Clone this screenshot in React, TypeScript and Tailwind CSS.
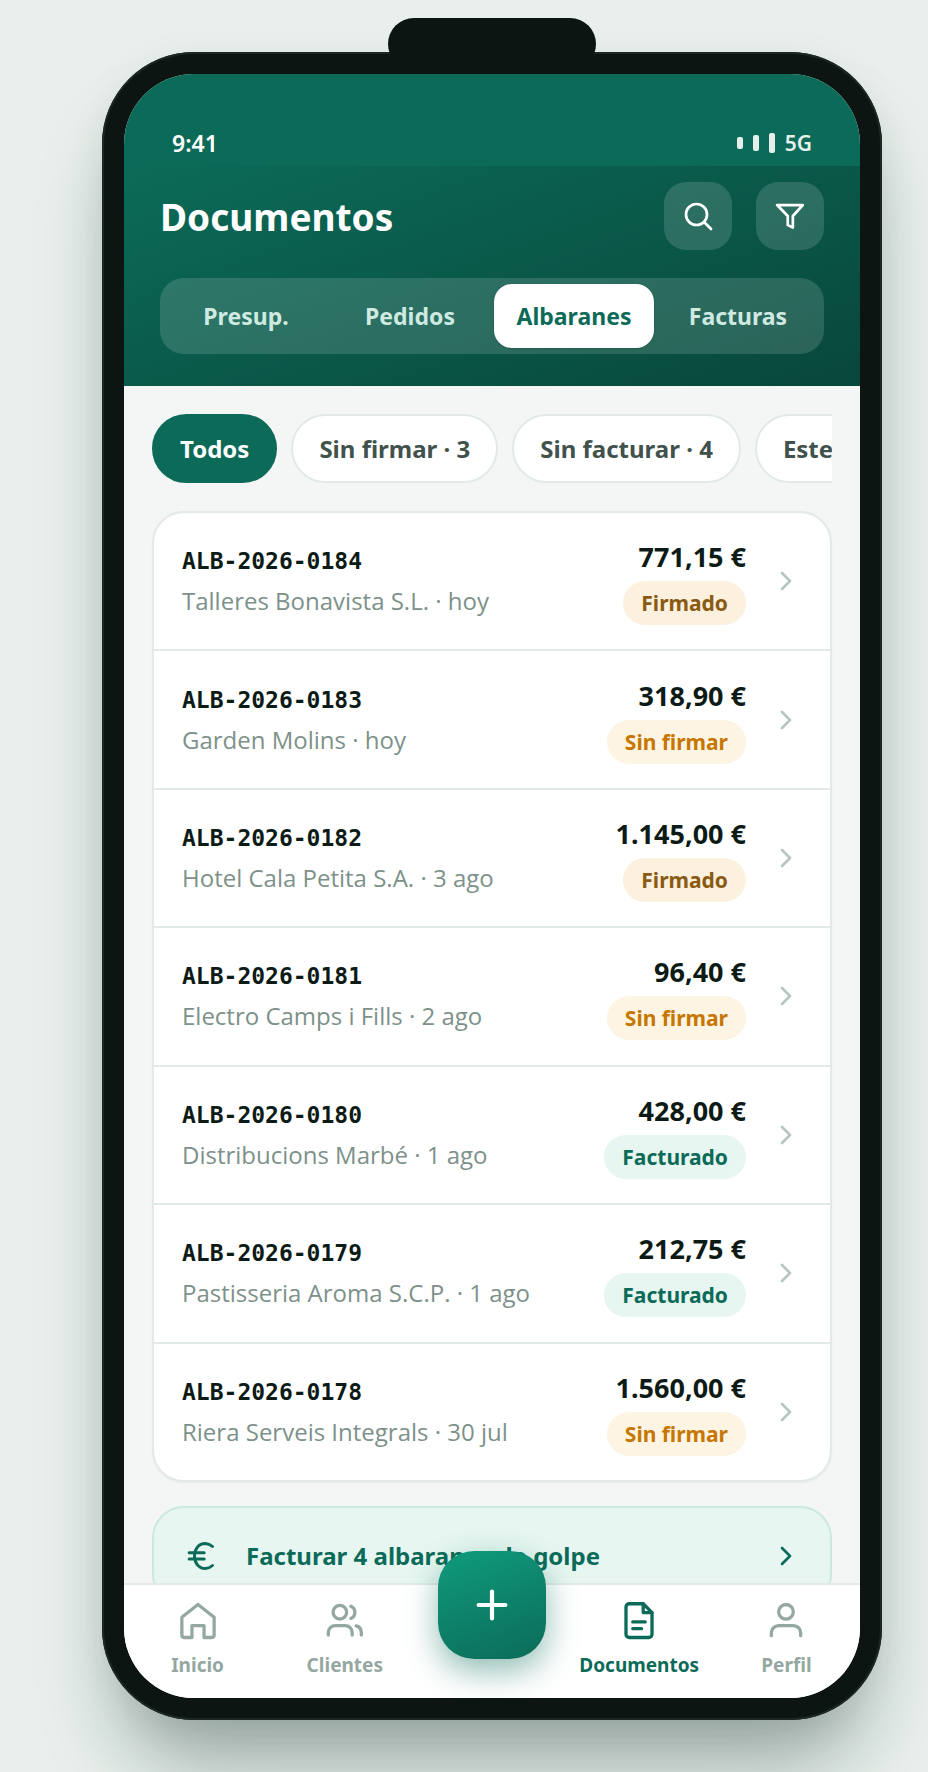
import { useState } from "react";
import type { ReactNode } from "react";
import clsx from "clsx";

type Status = "Firmado" | "Sin firmar" | "Facturado";

interface DeliveryNote {
  id: string;
  client: string;
  date: string;
  amount: string;
  status: Status;
}

const notes: DeliveryNote[] = [
  { id: "ALB-2026-0184", client: "Talleres Bonavista S.L.", date: "hoy", amount: "771,15 €", status: "Firmado" },
  { id: "ALB-2026-0183", client: "Garden Molins", date: "hoy", amount: "318,90 €", status: "Sin firmar" },
  { id: "ALB-2026-0182", client: "Hotel Cala Petita S.A.", date: "3 ago", amount: "1.145,00 €", status: "Firmado" },
  { id: "ALB-2026-0181", client: "Electro Camps i Fills", date: "2 ago", amount: "96,40 €", status: "Sin firmar" },
  { id: "ALB-2026-0180", client: "Distribucions Marbé", date: "1 ago", amount: "428,00 €", status: "Facturado" },
  { id: "ALB-2026-0179", client: "Pastisseria Aroma S.C.P.", date: "1 ago", amount: "212,75 €", status: "Facturado" },
  { id: "ALB-2026-0178", client: "Riera Serveis Integrals", date: "30 jul", amount: "1.560,00 €", status: "Sin firmar" },
];

const statusClasses: Record<Status, string> = {
  Firmado: "bg-[#fcf0df] text-[#8a5a12]",
  "Sin firmar": "bg-[#fef4e3] text-[#c77700]",
  Facturado: "bg-[#e7f6f1] text-[#0c6b58]",
};

const tabs = ["Presup.", "Pedidos", "Albaranes", "Facturas"];
const filters = ["Todos", "Sin firmar · 3", "Sin facturar · 4", "Este mes"];

interface IconProps {
  children: ReactNode;
  className: string;
  strokeWidth?: number;
}

function Icon({ children, className, strokeWidth = 1.8 }: IconProps) {
  return (
    <svg
      viewBox="0 0 24 24"
      fill="none"
      stroke="currentColor"
      strokeWidth={strokeWidth}
      strokeLinecap="round"
      strokeLinejoin="round"
      className={clsx("shrink-0", className)}
      aria-hidden="true"
    >
      {children}
    </svg>
  );
}

function Chevron({ className }: { className?: string }) {
  return (
    <Icon className={clsx("size-8", className)} strokeWidth={2}>
      <path d="m9 6 6 6-6 6" />
    </Icon>
  );
}

function StatusBar() {
  return (
    <div className="flex items-center justify-between bg-[#0c6b58] px-12 pt-[51px] pb-[5px] text-white">
      <span className="text-[23px] leading-9 font-semibold">9:41</span>
      <span className="flex items-center gap-2.5 text-[#e7efec]">
        <i className="h-3 w-1.5 rounded-xs bg-current" />
        <i className="h-4 w-1.5 rounded-xs bg-current" />
        <i className="h-5 w-1.5 rounded-xs bg-current" />
        <span className="text-[21px] leading-9 font-semibold">5G</span>
      </span>
    </div>
  );
}

interface HeaderProps {
  tab: string;
  onTabChange: (tab: string) => void;
}

function Header({ tab, onTabChange }: HeaderProps) {
  const buttonClass =
    "flex size-17 items-center justify-center rounded-[22px] bg-white/14 text-white";

  return (
    <header className="flex flex-col gap-7 bg-[linear-gradient(160deg,#0c6b58_0%,#08473b_100%)] px-9 pt-4 pb-8">
      <div className="flex items-center justify-between">
        <h1 className="text-[37px] leading-none font-bold text-white">Documentos</h1>
        <div className="flex gap-6">
          <button type="button" aria-label="Buscar" className={buttonClass}>
            <Icon className="size-9">
              <circle cx="11" cy="11" r="7" />
              <path d="m16.200 16.200 4.500 4.500" />
            </Icon>
          </button>
          <button type="button" aria-label="Filtrar" className={buttonClass}>
            <Icon className="size-9">
              <path d="M3.400 4.700h17.100L13.900 12v7.700l-3.400-1.600V12z" />
            </Icon>
          </button>
        </div>
      </div>
      <div className="flex gap-1 rounded-3xl bg-white/14 p-1.5">
        {tabs.map((label) => (
          <button
            key={label}
            type="button"
            aria-pressed={label === tab}
            onClick={() => onTabChange(label)}
            className={clsx(
              "h-16 flex-1 basis-0 rounded-[18px] text-[23px] font-bold",
              label === tab ? "bg-white text-[#0c6b58] shadow-sm" : "text-[#cfeae1]",
            )}
          >
            {label}
          </button>
        ))}
      </div>
    </header>
  );
}

function NoteRow({ note }: { note: DeliveryNote }) {
  return (
    <li className="flex flex-1 border-b-2 border-[#e2eae7] last:border-b-0">
      <a href={`#${note.id}`} className="flex flex-1 items-center gap-6 px-7">
        <span className="flex min-w-0 flex-1 flex-col gap-1">
          <span className="font-['DejaVu_Sans_Mono','Liberation_Mono',monospace] text-[23px] leading-9 font-bold text-[#0d1b17]">
            {note.id}
          </span>
          <span className="truncate font-['Open_Sans','Noto_Sans',sans-serif] text-[24px] leading-9 text-[#7d918a]">
            {note.client} · {note.date}
          </span>
        </span>
        <span className="flex flex-col items-end gap-1">
          <span className="text-[27px] leading-10 font-bold text-[#0d1b17]">{note.amount}</span>
          <span
            className={clsx(
              "rounded-full px-4.5 text-[21px] leading-11 font-bold",
              statusClasses[note.status],
            )}
          >
            {note.status}
          </span>
        </span>
        <Chevron className="text-[#b7c6c0]" />
      </a>
    </li>
  );
}

interface NavItemProps {
  label: string;
  active?: boolean;
  children: ReactNode;
}

function NavItem({ label, active = false, children }: NavItemProps) {
  return (
    <a
      href={`#${label.toLowerCase()}`}
      aria-current={active ? "page" : undefined}
      className={clsx(
        "flex flex-1 basis-0 flex-col items-center gap-2 text-[19px] leading-7 font-bold",
        active ? "text-[#0c6b58]" : "text-[#94a8a1]",
      )}
    >
      <Icon className="size-11">{children}</Icon>
      {label}
    </a>
  );
}

function BottomNav() {
  return (
    <nav className="relative flex border-t-2 border-[#e2eae7] bg-white pt-3.5 pb-[19px]">
      <NavItem label="Inicio">
        <path d="M3.200 10 12 3l8.800 7v9.700a1.300 1.300 0 0 1-1.300 1.300h-4.200v-6.500H8.700V21H4.500a1.300 1.300 0 0 1-1.300-1.300z" />
      </NavItem>
      <NavItem label="Clientes">
        <circle cx="9.200" cy="7.200" r="3.700" />
        <path d="M2.900 19.700v-1.500a3.700 3.700 0 0 1 3.700-3.700h5.600a3.700 3.700 0 0 1 3.700 3.700v1.500" />
        <path d="M15.200 4a3.600 3.600 0 0 1 0 6.600M18.100 14.700a3.700 3.700 0 0 1 2.800 3.600v1.400" />
      </NavItem>
      <div className="flex flex-1 basis-0 justify-center">
        <button
          type="button"
          aria-label="Nuevo documento"
          className="-mt-12 flex size-27 items-center justify-center rounded-[36px] bg-[linear-gradient(160deg,#0f9b7c,#0c6b58)] text-white shadow-[0_12px_32px_rgba(12,107,88,0.45)]"
        >
          <Icon className="size-11" strokeWidth={2.3}>
            <path d="M12 4.700v14.600M4.700 12h14.600" />
          </Icon>
        </button>
      </div>
      <NavItem label="Documentos" active>
        <path d="M14.300 2.600H6.700a1.800 1.800 0 0 0-1.800 1.800v14.800A1.800 1.800 0 0 0 6.700 21h10.600a1.800 1.800 0 0 0 1.800-1.800V7.400z" />
        <path d="M14.300 2.600v4.800h4.800M8.600 12.500h6.800M8.600 16.200h4.800" />
      </NavItem>
      <NavItem label="Perfil">
        <circle cx="12" cy="7" r="4" />
        <path d="M4 20v-1.500a4 4 0 0 1 4-4h8a4 4 0 0 1 4 4V20" />
      </NavItem>
    </nav>
  );
}

export default function App() {
  const [tab, setTab] = useState("Albaranes");
  const [filter, setFilter] = useState("Todos");

  return (
    <div className="h-screen overflow-hidden bg-[#e8efec] py-13 pr-[46px] pl-[102px] font-['Noto_Sans','Open_Sans',sans-serif]">
      <div className="relative h-full rounded-[92px] bg-[#0c1512] p-5.5 shadow-[0_60px_80px_-20px_rgba(12,40,32,0.37),0_8px_40px_rgba(12,40,32,0.06),inset_0_0_0_2px_#1c2622]">
        <div className="absolute -top-[34px] left-1/2 h-13 w-52 -translate-x-1/2 rounded-full bg-[#0c1512]" />
        <div className="flex h-full flex-col overflow-hidden rounded-[70px] bg-[#f4f6f5]">
          <StatusBar />
          <Header tab={tab} onTabChange={setTab} />

          <main className="flex min-h-0 flex-1 flex-col overflow-hidden px-7 pt-7">
            <div className="flex shrink-0 gap-3.5 overflow-x-auto [scrollbar-width:none]">
              {filters.map((label) => (
                <button
                  key={label}
                  type="button"
                  aria-pressed={label === filter}
                  onClick={() => setFilter(label)}
                  className={clsx(
                    "shrink-0 rounded-full border-2 px-6.5 py-4 text-[24px] leading-[33px] font-bold whitespace-nowrap",
                    label === filter
                      ? "border-[#0c6b58] bg-[#0c6b58] text-white"
                      : "border-[#e2eae7] bg-white text-[#41524c]",
                  )}
                >
                  {label}
                </button>
              ))}
            </div>

            <ul className="mt-7 flex min-h-[971px] shrink-0 flex-col overflow-hidden rounded-[32px] border-2 border-[#e2eae7] bg-white shadow-xs">
              {notes.map((note) => (
                <NoteRow key={note.id} note={note} />
              ))}
            </ul>

            <button
              type="button"
              className="mt-6 flex shrink-0 items-center gap-6 rounded-[32px] border-2 border-[#cbe9df] bg-[#e7f6f1] px-7 py-7 text-left text-[24px] leading-10 font-bold text-[#0c6b58]"
            >
              <Icon className="size-10">
                <path d="M18.300 6.300a7 7 0 0 0-4.400-1.800c-3.900 0-6.400 3.300-6.400 7.500s2.500 7.500 6.400 7.500a7 7 0 0 0 4.400-1.800M4.300 10.100h9M4.300 13.800h9" />
              </Icon>
              <span className="flex-1">Facturar 4 albaranes de golpe</span>
              <Chevron />
            </button>
          </main>

          <BottomNav />
        </div>
      </div>
    </div>
  );
}
